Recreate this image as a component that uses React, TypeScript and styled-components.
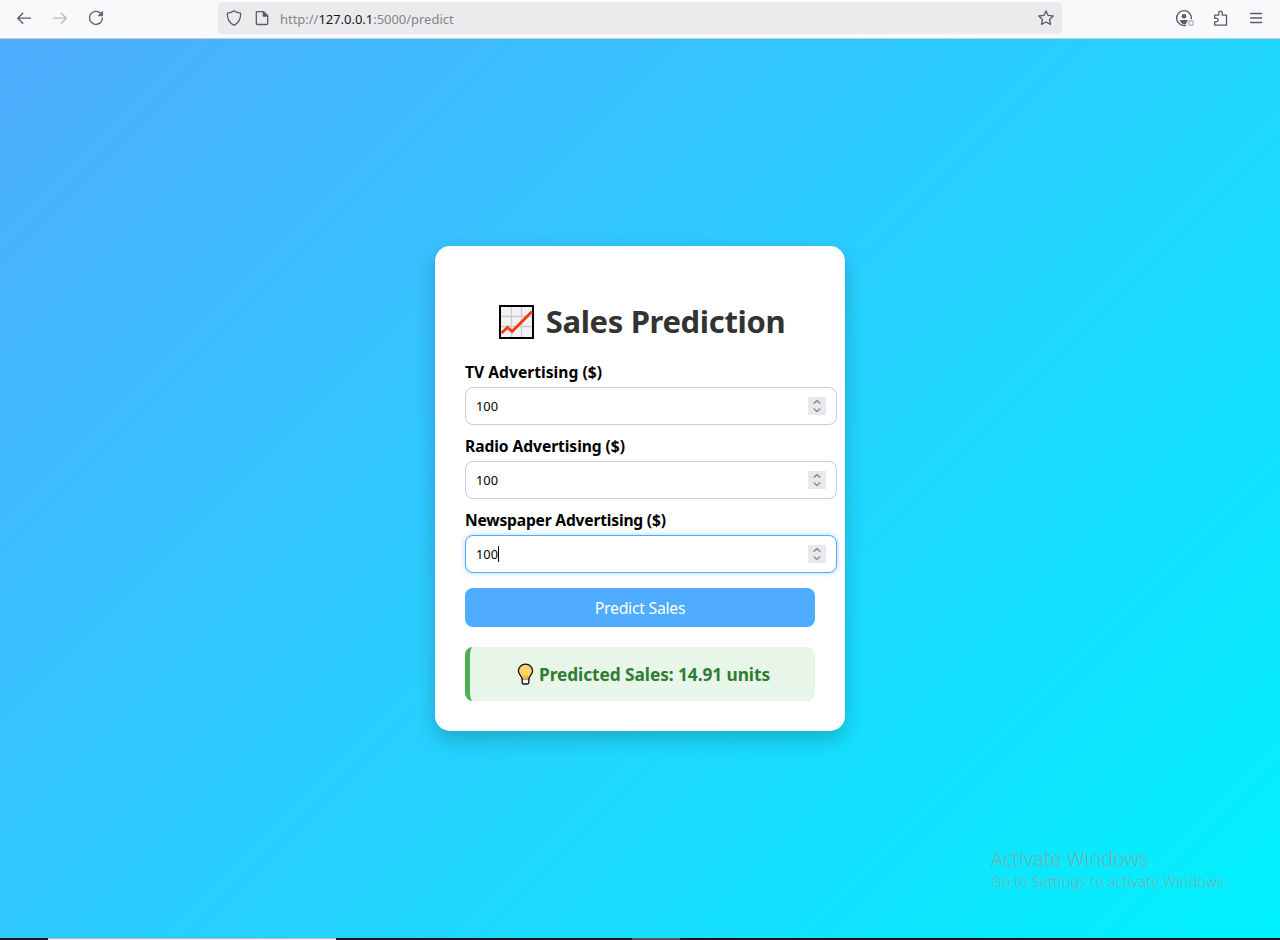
import React from 'react';
import styled, { createGlobalStyle, css } from 'styled-components';

const GlobalStyle = createGlobalStyle`
  * { box-sizing: border-box; }
  body { margin: 0; font-family: 'Noto Sans', 'Open Sans', sans-serif; overflow: hidden; }
`;

const Screen = styled.div`
  position: relative;
  display: flex;
  flex-direction: column;
  width: 1280px;
  height: 940px;
`;

const Toolbar = styled.header`
  display: flex;
  align-items: center;
  height: 39px;
  padding: 0 16px 3px;
  background: #f9f9fb;
  border-bottom: 1px solid #ccc;
  color: #5b5b66;
`;

const NavGroup = styled.div`
  display: flex;
  gap: 20px;
  width: 202px;
`;

const MenuGroup = styled(NavGroup)`
  width: auto;
  margin-left: auto;
`;

const IconSvg = styled.svg<{ $faded?: boolean }>`
  display: block;
  flex: none;
  width: 16px;
  height: 16px;
  overflow: visible;
  fill: none;
  stroke: currentColor;
  stroke-width: 1.3;
  stroke-linecap: round;
  stroke-linejoin: round;
  opacity: ${p => (p.$faded ? 0.4 : 1)};
`;

const AddressBar = styled.div`
  display: flex;
  align-items: center;
  gap: 12px;
  width: 844px;
  height: 32px;
  padding: 0 8px;
  background: #ebebed;
  border-radius: 4px;
`;

const Url = styled.div`
  flex: 1;
  margin-left: -2px;
  padding-top: 2px;
  font-size: 13px;
  line-height: 18px;
  letter-spacing: -0.03px;
  color: #85858a;
`;

const Host = styled.span`
  color: #15141a;
`;

const Page = styled.main`
  flex: 1;
  display: flex;
  align-items: center;
  justify-content: center;
  background: linear-gradient(135deg, #4facfe, #00f2fe);
`;

const Card = styled.section`
  width: 410px;
  height: 485px;
  padding: 30px;
  background: #fff;
  border-radius: 15px;
  box-shadow: 0 8px 20px rgba(0, 0, 0, 0.2);
`;

const Title = styled.h1`
  display: flex;
  align-items: center;
  justify-content: center;
  gap: 12px;
  height: 43px;
  margin: 24px 0 18px;
  padding-left: 4px;
  font-size: 31px;
  font-weight: 700;
  letter-spacing: -0.34px;
  color: #333;
  white-space: nowrap;
`;

const TitleText = styled.span`
  padding-bottom: 2px;
`;

const ChartSvg = styled.svg`
  display: block;
  width: 35px;
  height: 34px;
`;

const Field = styled.div`
  margin-bottom: 10px;
`;

const Label = styled.label<{ $tracking: number }>`
  display: block;
  margin-bottom: 4px;
  font-size: 15.6px;
  font-weight: 700;
  line-height: 22px;
  letter-spacing: ${p => p.$tracking}px;
  color: #000;
`;

const InputBox = styled.div<{ $focused?: boolean }>`
  display: flex;
  align-items: center;
  width: 372px;
  height: 38px;
  padding: 0 10px;
  background: #fff;
  border: 1px solid #ccc;
  border-radius: 8px;
  font-size: 12.8px;
  color: #000;
  ${p =>
    p.$focused &&
    css`
      border-color: #4facfe;
      box-shadow: 0 0 5px rgba(79, 172, 254, 0.5);
    `}
`;

const Caret = styled.span`
  width: 1px;
  height: 16px;
  background: #000;
`;

const Spinner = styled.span`
  display: flex;
  width: 18px;
  height: 18px;
  margin-left: auto;
  background: #e9e9ed;
`;

const SpinnerSvg = styled.svg`
  width: 18px;
  height: 18px;
  fill: none;
  stroke: #8f8f9d;
  stroke-width: 1.6;
`;

const Submit = styled.button`
  display: block;
  width: 350px;
  height: 39px;
  margin-top: 15px;
  padding: 0;
  border: 0;
  border-radius: 8px;
  background: #4facfe;
  color: #fff;
  font: 400 15.8px 'Noto Sans', sans-serif;
  letter-spacing: -0.27px;
`;

const Result = styled.div`
  display: flex;
  align-items: center;
  justify-content: center;
  gap: 5px;
  height: 54px;
  margin-top: 20px;
  border-left: 5px solid #4caf50;
  border-radius: 8px;
  background: #e8f5e9;
  color: #2e7d32;
  font-size: 17.3px;
  font-weight: 700;
  letter-spacing: -0.06px;
  padding-left: 2px;
`;

const BulbSvg = styled.svg`
  width: 17px;
  height: 22px;
`;

const Watermark = styled.aside`
  position: absolute;
  left: 991px;
  top: 847px;
  color: rgba(160, 150, 150, 0.75);
  font-weight: 300;
  white-space: nowrap;
`;

const WatermarkTitle = styled.div`
  font-size: 19.9px;
  line-height: 24px;
`;

const WatermarkText = styled.div`
  font-size: 14.8px;
  line-height: 20px;
`;

const Taskbar = styled.footer`
  display: flex;
  height: 2px;
  background: #1c1518;
`;

const TaskSlot = styled.div<{ $width: number; $tone?: string }>`
  width: ${p => p.$width}px;
  background: ${p => p.$tone ?? 'transparent'};
`;

const ActiveSlot = styled(TaskSlot)`
  background: #f4f4f4;
  border-top: 1px solid #bbb;
`;

function ChartIcon() {
  return (
    <ChartSvg viewBox="0 0 35 34">
      <rect x="1" y="1" width="33" height="32" fill="#f2f2f2" stroke="#000" strokeWidth="2" />
      <path d="M12.5 2v30M22.5 2v30M2 11.5h31M2 21.5h31" stroke="#ccc" strokeWidth="1.3" />
      <path d="M2.5 28l6-5.500 4.500 4L33 6.500" fill="none" stroke="#f03a17" strokeWidth="2.800" />
    </ChartSvg>
  );
}

function BulbIcon() {
  return (
    <BulbSvg viewBox="0 0 17 22">
      <path
        d="M8.500 1.200C4.400 1.200 1.400 4.200 1.400 8c0 3.300 3.300 5 3.800 8h6.600c.5-3 3.800-4.700 3.800-8 0-3.800-3-6.800-7.100-6.800z"
        fill="#ffd36b" stroke="#111" strokeWidth="1.300"
      />
      <path d="M5.500 11.500l3 1.500 3-1.500-.8 4H6.300z" fill="#fcb827" />
      <path d="M5.200 15.800h6.600v3.700q0 1.500-1.500 1.500H6.700q-1.500 0-1.500-1.500z" fill="#f5f5f5" stroke="#111" strokeWidth="1.300" />
      <path d="M5.800 15.800h5.400" stroke="#d9c99a" strokeWidth="1.300" />
    </BulbSvg>
  );
}

function NumberField(props: { label: string; value: string; tracking?: number; focused?: boolean }) {
  return (
    <Field>
      <Label $tracking={props.tracking ?? 0}>{props.label}</Label>
      <InputBox $focused={props.focused}>
        {props.value}
        {props.focused && <Caret />}
        <Spinner>
          <SpinnerSvg viewBox="0 0 18 18">
            <path d="M5.700 6.700l3.300-3L12.300 6.700M5.700 11.500l3.300 3 3.300-3" />
          </SpinnerSvg>
        </Spinner>
      </InputBox>
    </Field>
  );
}

export default function App() {
  return (
    <Screen>
      <GlobalStyle />
      <Toolbar>
        <NavGroup>
          <IconSvg><path d="M14.500 8.200H1.700M6.800 3.200l-5 5 5 5" /></IconSvg>
          <IconSvg $faded><path d="M1.500 8.200h12.800M9.300 3.200l5 5-5 5" /></IconSvg>
          <IconSvg>
            <path d="M12.800 3.500A6.500 6.500 0 1 0 14.500 8" />
            <path d="M14.600 1.600v4.200h-4.200z" fill="currentColor" strokeWidth="0.800" />
          </IconSvg>
        </NavGroup>
        <AddressBar>
          <IconSvg>
            <path d="M8 .7c2 1.500 4.200 2.200 6.700 2.400.2 5.300-1.600 9.700-6.700 12.200C2.900 12.800 1.100 8.400 1.300 3.100 3.800 2.900 6 2.200 8 .7z" />
          </IconSvg>
          <IconSvg>
            <path d="M3.500 1.700h6l4.200 4.200v7.400q0 1.200-1.200 1.200h-9q-1.200 0-1.200-1.200V2.900q0-1.200 1.200-1.200z" />
            <path d="M9.300 1.700v4.400h4.400z" fill="currentColor" />
          </IconSvg>
          <Url>http://<Host>127.0.0.1</Host>:5000/predict</Url>
          <IconSvg>
            <path d="M8 .9l2.100 4.500 5.100.6-3.700 3.500 1 5L8 12l-4.500 2.500 1-5L.8 6l5.100-.6z" />
          </IconSvg>
        </AddressBar>
        <MenuGroup>
          <IconSvg>
            <path d="M9.500 15.300A7.400 7.400 0 1 1 15.400 8.500" strokeWidth="1.400" />
            <circle cx="8" cy="6.300" r="2.300" fill="currentColor" stroke="none" />
            <path d="M4 10h8l-2 3.700q-2 .7-4-.2Q4.300 12.500 4 10z" fill="currentColor" stroke="none" />
            <circle cx="15" cy="13" r="2.300" stroke="#b0b0b6" strokeWidth="1.200" />
          </IconSvg>
          <IconSvg>
            <path d="M2.700 5.200h4V3a1.800 1.800 0 0 1 3.600 0v2.200h4.200v10H2.700v-3.400h1.700a1.700 1.700 0 0 0 0-3.400H2.700z" />
          </IconSvg>
          <IconSvg><path d="M2.600 3.500h11M2.600 8h11M2.600 12.500h11" /></IconSvg>
        </MenuGroup>
      </Toolbar>
      <Page>
        <Card>
          <Title><ChartIcon /><TitleText>Sales Prediction</TitleText></Title>
          <NumberField label="TV Advertising ($)" value="100" tracking={0.03} />
          <NumberField label="Radio Advertising ($)" value="100" tracking={-0.06} />
          <NumberField label="Newspaper Advertising ($)" value="100" tracking={-0.19} focused />
          <Submit>Predict Sales</Submit>
          <Result><BulbIcon />Predicted Sales: 14.91 units</Result>
        </Card>
      </Page>
      <Watermark>
        <WatermarkTitle>Activate Windows</WatermarkTitle>
        <WatermarkText>Go to Settings to activate Windows.</WatermarkText>
      </Watermark>
      <Taskbar>
        <TaskSlot $width={48} />
        <ActiveSlot $width={288} />
        <TaskSlot $width={296} />
        <TaskSlot $width={48} $tone="#575355" />
      </Taskbar>
    </Screen>
  );
}
